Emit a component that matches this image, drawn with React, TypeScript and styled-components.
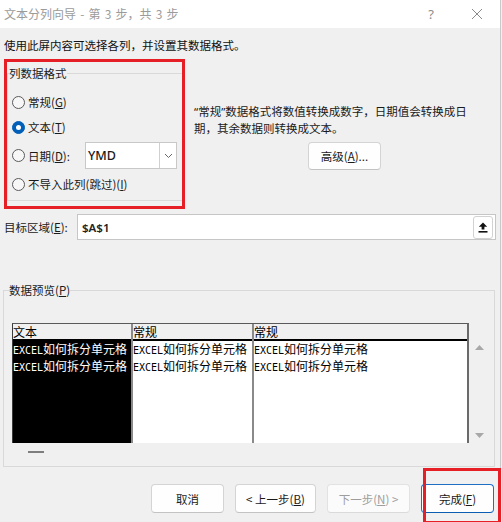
import React from "react";
import styled, { createGlobalStyle } from "styled-components";

const GlobalStyle = createGlobalStyle`
  html, body { margin: 0; padding: 0; background: #f0f0f0; overflow: hidden; }
  body {
    font-family: "Noto Sans CJK SC", "Noto Sans", sans-serif;
    font-size: 11.5px;
    color: #1a1a1a;
  }
  * { box-sizing: border-box; }
`;

const Window = styled.div`
  width: 501px;
  height: 522px;
  background: #f0f0f0;
  border-right: 1px solid #c9c9c9;
  display: flex;
  flex-direction: column;
  position: relative;
`;

const TitleBar = styled.div`
  height: 28px;
  background: #ffffff;
  display: flex;
  align-items: center;
  padding-left: 4px;
  font-size: 12px;
  line-height: 16px;
  color: #9b9b9b;
`;

const TitleText = styled.span`
  flex: 1;
  word-spacing: 1.5px;
`;

const TitleButton = styled.span`
  width: 46px;
  height: 28px;
  display: flex;
  align-items: center;
  justify-content: center;
  color: #8c8c8c;
  font-family: "Noto Sans", sans-serif;
  font-size: 13px;
`;

const Content = styled.div`
  flex: 1;
  display: flex;
  flex-direction: column;
  padding: 0 4px 0 4px;
`;

const Instruction = styled.div`
  margin-top: 9px;
  line-height: 16px;
  color: #111;
`;

const FormatRow = styled.div`
  display: flex;
  margin-top: 6px;
  height: 150px;
`;

const FormatGroup = styled.div`
  position: relative;
  width: 181px;
  height: 150px;
  flex-shrink: 0;
`;

const Annotation = styled.div<{ $inset: string }>`
  position: absolute;
  inset: ${(p) => p.$inset};
  border: 3px solid #e61e25;
  pointer-events: none;
  z-index: 5;
`;

const GroupBox = styled.fieldset<{ $w: number; $h: number; $mt: number; $ml: number; $pt: number; $pl: number }>`
  margin: ${(p) => `${p.$mt}px 0 0 ${p.$ml}px`};
  padding: ${(p) => `${p.$pt}px 0 0 ${p.$pl}px`};
  width: ${(p) => p.$w}px;
  height: ${(p) => p.$h}px;
  border: 1px solid #d9d9d9;
  min-width: 0;
`;

const GroupLegend = styled.legend<{ $ml: number }>`
  padding: 0;
  margin-left: ${(p) => p.$ml}px;
  line-height: 16px;
  font-size: 11.5px;
  color: #1a1a1a;
`;

const RadioList = styled.div`
  display: flex;
  flex-direction: column;
  gap: 5px;
`;

const RadioRow = styled.div`
  display: flex;
  align-items: center;
  min-height: 20px;
  line-height: 16px;
`;

const RadioCircle = styled.span<{ $checked?: boolean }>`
  width: 13px;
  height: 13px;
  border-radius: 50%;
  flex-shrink: 0;
  border: 1px solid ${(p) => (p.$checked ? "#005fb8" : "#5a5a5a")};
  background: ${(p) => (p.$checked ? "#005fb8" : "#f7f7f7")};
  display: flex;
  align-items: center;
  justify-content: center;
  margin-right: 3px;
  &::after {
    content: "";
    display: ${(p) => (p.$checked ? "block" : "none")};
    width: 5px;
    height: 5px;
    border-radius: 50%;
    background: #ffffff;
  }
`;

const DateLabel = styled.span`
  width: 57px;
`;

const Select = styled.div`
  width: 92px;
  height: 27px;
  display: flex;
  background: #ffffff;
  border: 1px solid #c8c8c8;
`;

const SelectValue = styled.span`
  flex: 1;
  display: flex;
  align-items: center;
  padding-left: 2px;
  font-family: "Noto Sans", sans-serif;
  font-size: 12.5px;
  font-weight: 500;
  color: #1a1a1a;
`;

const SelectArrow = styled.span`
  width: 17px;
  border-left: 1px solid #d0d0d0;
  display: flex;
  align-items: center;
  justify-content: center;
`;

const DescriptionPane = styled.div`
  flex: 1;
  padding: 44px 0 0 9px;
  display: flex;
  flex-direction: column;
  align-items: flex-start;
`;

const DescText = styled.div`
  font-family: "Noto Sans", "Noto Sans CJK SC", sans-serif;
  line-height: 17px;
  color: #1a1a1a;
`;

const Button = styled.button<{ $w: number; $disabled?: boolean; $default?: boolean }>`
  width: ${(p) => p.$w}px;
  height: 29px;
  padding: 0;
  background: ${(p) => (p.$disabled ? "#fbfbfb" : "#fefefe")};
  border: 1px solid ${(p) => (p.$default ? "#1f6fc5" : p.$disabled ? "#e2e2e2" : "#d4d4d4")};
  border-bottom-color: ${(p) => (p.$default ? "#0a5db3" : p.$disabled ? "#dadada" : "#c3c3c3")};
  border-radius: 4px;
  font-family: "Noto Sans CJK SC", "Noto Sans", sans-serif;
  font-size: 11.5px;
  line-height: 16px;
  color: ${(p) => (p.$disabled ? "#9e9e9e" : "#1a1a1a")};
  position: relative;
`;

const AdvancedButton = styled(Button)`
  margin: 5px 0 0 114px;
  height: 28px;
`;

const TargetRow = styled.div`
  display: flex;
  align-items: center;
  margin-top: 5px;
  height: 26px;
`;

const TargetLabel = styled.span`
  width: 73px;
  line-height: 16px;
`;

const TargetInput = styled.div`
  flex: 1;
  height: 26px;
  background: #ffffff;
  border: 1px solid #c6c6c6;
  display: flex;
  align-items: center;
  padding: 0 2px 0 4px;
  font-family: "Noto Sans", sans-serif;
  font-weight: 600;
  font-size: 11.5px;
  color: #222;
`;

const CollapseButton = styled.span`
  margin-left: auto;
  width: 20px;
  height: 23px;
  background: #ffffff;
  border: 1px solid #d2d2d2;
  border-radius: 3px;
  display: flex;
  align-items: center;
  justify-content: center;
`;

const PreviewBody = styled.div`
  display: flex;
`;

const PreviewTable = styled.div`
  width: 457px;
  height: 120px;
  display: flex;
  background: #ffffff;
  border-top: 1px solid #5a5a5a;
  border-left: 1px solid #3c3c3c;
  border-right: 2px solid #6a6a6a;
  overflow: hidden;
`;

const Column = styled.div<{ $w?: number; $sep?: boolean }>`
  display: flex;
  flex-direction: column;
  ${(p) => (p.$w ? `width: ${p.$w}px; flex-shrink: 0;` : "flex: 1;")}
  ${(p) => (p.$sep ? "border-left: 2px solid #8a8a8a;" : "")}
`;

const HeaderCell = styled.div`
  height: 17px;
  line-height: 15px;
  background: #f0f0f0;
  border-bottom: 2px solid #000000;
  font-size: 12px;
  color: #000;
  white-space: nowrap;
  overflow: hidden;
`;

const DataArea = styled.div<{ $dark?: boolean }>`
  flex: 1;
  background: ${(p) => (p.$dark ? "#000000" : "#ffffff")};
  color: ${(p) => (p.$dark ? "#ffffff" : "#000000")};
  font-size: 12px;
  line-height: 15px;
  white-space: nowrap;
  overflow: hidden;
`;

const Latin = styled.span`
  font-family: "DejaVu Sans Mono", monospace;
  font-size: 10px;
`;

const ScrollColumn = styled.div`
  width: 20px;
  display: flex;
  flex-direction: column;
  align-items: center;
  justify-content: space-between;
  padding: 22px 0 5px 0;
`;

const HScrollThumb = styled.div`
  margin: 8px 0 0 16px;
  width: 16px;
  height: 2px;
  background: #7e7e7e;
`;

const ButtonRow = styled.div`
  display: flex;
  justify-content: flex-end;
  gap: 11px;
  margin: 17px 2px 0 0;
`;

const cellText = "如何拆分单元格";

const DataRows: React.FC = () => (
  <>
    <div>
      <Latin>EXCEL</Latin>
      {cellText}
    </div>
    <div>
      <Latin>EXCEL</Latin>
      {cellText}
    </div>
  </>
);

export default function App() {
  return (
    <>
      <GlobalStyle />
      <Window>
        <TitleBar>
          <TitleText>文本分列向导 - 第 3 步，共 3 步</TitleText>
          <TitleButton>?</TitleButton>
          <TitleButton>
            <svg width="12" height="12" viewBox="0 0 12 12">
              <path d="M1 1 L11 11 M11 1 L1 11" stroke="#8a8a8a" strokeWidth="1" fill="none" />
            </svg>
          </TitleButton>
        </TitleBar>
        <Content>
          <Instruction>使用此屏内容可选择各列，并设置其数据格式。</Instruction>
          <FormatRow>
            <FormatGroup>
              <GroupBox $w={176} $h={136} $mt={6} $ml={3} $pt={11} $pl={4}>
                <GroupLegend $ml={-3}>列数据格式</GroupLegend>
                <RadioList>
                  <RadioRow>
                    <RadioCircle />
                    <span>
                      常规(<u>G</u>)
                    </span>
                  </RadioRow>
                  <RadioRow>
                    <RadioCircle $checked />
                    <span>
                      文本(<u>T</u>)
                    </span>
                  </RadioRow>
                  <RadioRow>
                    <RadioCircle />
                    <DateLabel>
                      日期(<u>D</u>):
                    </DateLabel>
                    <Select>
                      <SelectValue>YMD</SelectValue>
                      <SelectArrow>
                        <svg width="9" height="6" viewBox="0 0 9 6">
                          <path d="M1 1 L4.5 4.5 L8 1" stroke="#6a6a6a" strokeWidth="1" fill="none" />
                        </svg>
                      </SelectArrow>
                    </Select>
                  </RadioRow>
                  <RadioRow>
                    <RadioCircle />
                    <span>
                      不导入此列(跳过)(<u>I</u>)
                    </span>
                  </RadioRow>
                </RadioList>
              </GroupBox>
              <Annotation $inset="0" />
            </FormatGroup>
            <DescriptionPane>
              <DescText>
                “常规”数据格式将数值转换成数字，日期值会转换成日
                <br />
                期，其余数据则转换成文本。
              </DescText>
              <AdvancedButton $w={73}>
                高级(<u>A</u>)...
              </AdvancedButton>
            </DescriptionPane>
          </FormatRow>
          <TargetRow>
            <TargetLabel>
              目标区域(<u>E</u>):
            </TargetLabel>
            <TargetInput>
              $A$1
              <CollapseButton>
                <svg width="10" height="11" viewBox="0 0 10 11">
                  <path d="M5 0.5 L9.2 4.8 L6.4 4.8 L6.4 7.6 L3.6 7.6 L3.6 4.8 L0.8 4.8 Z" fill="#111" />
                  <rect x="0.5" y="9" width="9" height="1.6" fill="#111" />
                </svg>
              </CollapseButton>
            </TargetInput>
          </TargetRow>
          <GroupBox $w={492} $h={185} $mt={42} $ml={-1} $pt={25} $pl={8}>
            <GroupLegend $ml={-3}>
              数据预览(<u>P</u>)
            </GroupLegend>
            <PreviewBody>
              <PreviewTable>
                <Column $w={118}>
                  <HeaderCell>文本</HeaderCell>
                  <DataArea $dark>
                    <DataRows />
                  </DataArea>
                </Column>
                <Column $w={121} $sep>
                  <HeaderCell>常规</HeaderCell>
                  <DataArea>
                    <DataRows />
                  </DataArea>
                </Column>
                <Column $sep>
                  <HeaderCell>常规</HeaderCell>
                  <DataArea>
                    <DataRows />
                  </DataArea>
                </Column>
              </PreviewTable>
              <ScrollColumn>
                <svg width="9" height="5" viewBox="0 0 9 5">
                  <path d="M4.5 0 L9 5 L0 5 Z" fill="#a8a8a8" />
                </svg>
                <svg width="9" height="5" viewBox="0 0 9 5">
                  <path d="M0 0 L9 0 L4.5 5 Z" fill="#a8a8a8" />
                </svg>
              </ScrollColumn>
            </PreviewBody>
            <HScrollThumb />
          </GroupBox>
          <ButtonRow>
            <Button $w={73}>取消</Button>
            <Button $w={81}>
              &lt; 上一步(<u>B</u>)
            </Button>
            <Button $w={83} $disabled>
              下一步(<u>N</u>) &gt;
            </Button>
            <Button $w={73} $default>
              完成(<u>F</u>)
              <Annotation $inset="-17px -8px -12px 1px" />
            </Button>
          </ButtonRow>
        </Content>
      </Window>
    </>
  );
}
